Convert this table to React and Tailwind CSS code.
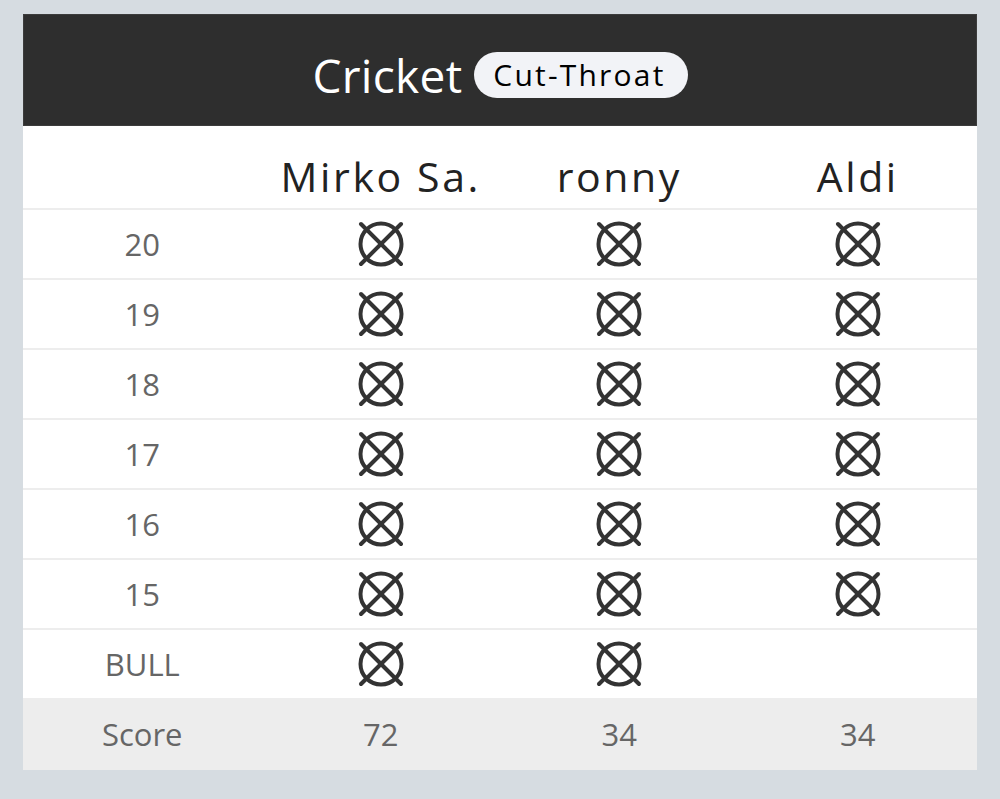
import React from "react";

const players = [
  { name: "Mirko Sa.", score: 72, marks: [1, 1, 1, 1, 1, 1, 1] },
  { name: "ronny", score: 34, marks: [1, 1, 1, 1, 1, 1, 1] },
  { name: "Aldi", score: 34, marks: [1, 1, 1, 1, 1, 1, 0] },
];
const labels = ["20", "19", "18", "17", "16", "15", "BULL"];

function Closed() {
  return (
    <svg width="48" height="48" viewBox="0 0 48 48" fill="none" stroke="#333" strokeWidth="4">
      <circle cx="24" cy="24" r="20.5" />
      <line x1="4" y1="4" x2="44" y2="44" strokeLinecap="round" />
      <line x1="44" y1="4" x2="4" y2="44" strokeLinecap="round" />
    </svg>
  );
}

export default function App() {
  return (
    <div className="min-h-screen bg-[#d6dce1] pt-[14px]" style={{ fontFamily: '"Open Sans", sans-serif' }}>
      <div className="w-[954px] mx-auto bg-white">
        <div className="h-[112px] pt-[9px] bg-[#2e2e2e] border border-[#3c3c3c] flex items-center justify-center gap-[12px]">
          <span className="text-[46px] text-white leading-none tracking-[0.3px]">Cricket</span>
          <span className="h-[46px] pl-[19px] pr-[22px] rounded-full bg-[#f2f3f7] text-black text-[30px] tracking-[2.2px] flex items-center leading-none">
            Cut-Throat
          </span>
        </div>
        <div className="grid grid-cols-4 h-[84px] border-b-2 border-[#ededed] items-center text-[#222] text-[41px] tracking-[2.6px]">
          <div />
          {players.map((p) => (
            <div key={p.name} className="text-center leading-none pt-[18px]">{p.name}</div>
          ))}
        </div>
        {labels.map((l, i) => (
          <div
            key={l}
            className={`grid grid-cols-4 items-center ${i < 6 ? "h-[70px] border-b-2 border-[#ededed]" : "h-[68px]"}`}
          >
            <div className="text-center text-[31px] text-[#666] leading-none">{l}</div>
            {players.map((p) => (
              <div key={p.name} className="flex justify-center">
                {p.marks[i] ? <Closed /> : null}
              </div>
            ))}
          </div>
        ))}
        <div className="grid grid-cols-4 items-center h-[72px] bg-[#ededed] text-[31px] text-[#666]">
          <div className="text-center leading-none">Score</div>
          {players.map((p) => (
            <div key={p.name} className="text-center leading-none">{p.score}</div>
          ))}
        </div>
      </div>
    </div>
  );
}
